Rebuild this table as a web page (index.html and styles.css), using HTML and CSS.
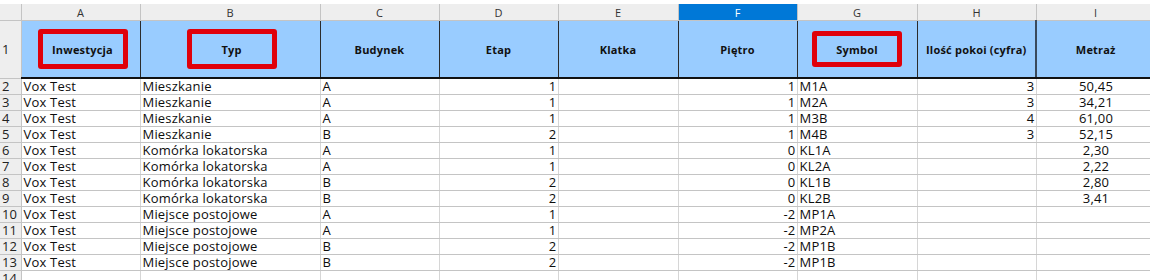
FILE: index.html
```html
<!DOCTYPE html>
<html lang="pl">
<head>
<meta charset="utf-8">
<title>Arkusz</title>
<link rel="stylesheet" href="styles.css">
</head>
<body>
<div class="sheet">
  <table class="grid">
    <colgroup>
      <col class="c-rn"><col class="c-a"><col class="c-b"><col class="c-c"><col class="c-d"><col class="c-e"><col class="c-f"><col class="c-g"><col class="c-h"><col class="c-i">
    </colgroup>
    <thead>
      <tr class="colhead">
        <th class="corner"></th>
        <th>A</th><th>B</th><th>C</th><th>D</th><th>E</th><th class="sel">F</th><th>G</th><th>H</th><th>I</th>
      </tr>
    </thead>
    <tbody>
      <tr class="titles">
        <td class="rn">1</td>
        <td><span class="mark">Inwestycja</span></td>
        <td><span class="mark">Typ</span></td>
        <td>Budynek</td>
        <td>Etap</td>
        <td>Klatka</td>
        <td>Piętro</td>
        <td><span class="mark mark-s">Symbol</span></td>
        <td>Ilość pokoi (cyfra)</td>
        <td class="last">Metraż</td>
      </tr>
      <tr><td class="rn">2</td><td>Vox Test</td><td>Mieszkanie</td><td>A</td><td class="r">1</td><td></td><td class="r">1</td><td>M1A</td><td class="r">3</td><td class="c">50,45</td></tr>
      <tr><td class="rn">3</td><td>Vox Test</td><td>Mieszkanie</td><td>A</td><td class="r">1</td><td></td><td class="r">1</td><td>M2A</td><td class="r">3</td><td class="c">34,21</td></tr>
      <tr><td class="rn">4</td><td>Vox Test</td><td>Mieszkanie</td><td>A</td><td class="r">1</td><td></td><td class="r">1</td><td>M3B</td><td class="r">4</td><td class="c">61,00</td></tr>
      <tr><td class="rn">5</td><td>Vox Test</td><td>Mieszkanie</td><td>B</td><td class="r">2</td><td></td><td class="r">1</td><td>M4B</td><td class="r">3</td><td class="c">52,15</td></tr>
      <tr><td class="rn">6</td><td>Vox Test</td><td>Komórka lokatorska</td><td>A</td><td class="r">1</td><td></td><td class="r">0</td><td>KL1A</td><td class="r"></td><td class="c">2,30</td></tr>
      <tr><td class="rn">7</td><td>Vox Test</td><td>Komórka lokatorska</td><td>A</td><td class="r">1</td><td></td><td class="r">0</td><td>KL2A</td><td class="r"></td><td class="c">2,22</td></tr>
      <tr><td class="rn">8</td><td>Vox Test</td><td>Komórka lokatorska</td><td>B</td><td class="r">2</td><td></td><td class="r">0</td><td>KL1B</td><td class="r"></td><td class="c">2,80</td></tr>
      <tr><td class="rn">9</td><td>Vox Test</td><td>Komórka lokatorska</td><td>B</td><td class="r">2</td><td></td><td class="r">0</td><td>KL2B</td><td class="r"></td><td class="c">3,41</td></tr>
      <tr><td class="rn">10</td><td>Vox Test</td><td>Miejsce postojowe</td><td>A</td><td class="r">1</td><td></td><td class="r">-2</td><td>MP1A</td><td class="r"></td><td class="c"></td></tr>
      <tr><td class="rn">11</td><td>Vox Test</td><td>Miejsce postojowe</td><td>A</td><td class="r">1</td><td></td><td class="r">-2</td><td>MP2A</td><td class="r"></td><td class="c"></td></tr>
      <tr><td class="rn">12</td><td>Vox Test</td><td>Miejsce postojowe</td><td>B</td><td class="r">2</td><td></td><td class="r">-2</td><td>MP1B</td><td class="r"></td><td class="c"></td></tr>
      <tr><td class="rn">13</td><td>Vox Test</td><td>Miejsce postojowe</td><td>B</td><td class="r">2</td><td></td><td class="r">-2</td><td>MP1B</td><td class="r"></td><td class="c"></td></tr>
      <tr><td class="rn">14</td><td></td><td></td><td></td><td></td><td></td><td></td><td></td><td></td><td></td></tr>
    </tbody>
  </table>
</div>
</body>
</html>
```

FILE: styles.css
```css
html, body {
  margin: 0;
  padding: 0;
  background: #ffffff;
}

.sheet {
  padding-top: 4px;
  width: 1160px;
  overflow: hidden;
}

.grid {
  border-collapse: collapse;
  table-layout: fixed;
  width: 1155px;
  font-family: "Open Sans", "Liberation Sans", sans-serif;
  color: #111111;
}

.c-rn { width: 21px; }
.c-a { width: 119px; }
.c-b { width: 180px; }
.c-c { width: 119px; }
.c-d { width: 119px; }
.c-e { width: 120px; }
.c-f { width: 119px; }
.c-g { width: 120px; }
.c-h { width: 119px; }
.c-i { width: 119px; }

.colhead th {
  height: 16px;
  padding: 0;
  background: #eeeeee;
  font-weight: normal;
  font-size: 11px;
  color: #333333;
  text-align: center;
  border-right: 1px solid #c4c4c4;
  border-bottom: 1px solid #c4c4c4;
  line-height: 15px;
}

.colhead th.sel {
  background: #0078d7;
  color: #ffffff;
}

.titles td {
  height: 56px;
  padding: 0;
  background: #99ccff;
  font-weight: bold;
  font-size: 11px;
  text-align: center;
  vertical-align: middle;
  border-right: 1px solid #2b2b2b;
  border-bottom: 2px solid #111111;
  color: #111111;
  white-space: nowrap;
}

.titles td:nth-child(2) {
  padding-left: 4px;
}

.titles td:nth-child(3) {
  padding-left: 3px;
}

.titles td.rn {
  background: #eeeeee;
  font-weight: normal;
  font-size: 13px;
  text-align: left;
  padding-left: 2px;
  border-right: 1px solid #c4c4c4;
  border-bottom: 1px solid #c4c4c4;
}

.titles td:nth-child(9) {
  border-right: 2px solid #3a4a5c;
}

.mark {
  display: inline-flex;
  align-items: center;
  justify-content: center;
  box-sizing: border-box;
  width: 90px;
  height: 40px;
  border: 5px solid #e0000a;
  border-radius: 3px;
  vertical-align: middle;
}

.mark-s {
  height: 36px;
}

tbody tr td {
  height: 15px;
  padding: 0 1px 0 2px;
  font-size: 13px;
  letter-spacing: 0.2px;
  line-height: 15px;
  white-space: nowrap;
  overflow: hidden;
  border-right: 1px solid #d6d6d6;
  border-bottom: 1px solid #c4c4c4;
  color: #0d0d0d;
}

tbody td.rn {
  background: #eeeeee;
  padding-left: 2px;
  letter-spacing: 0;
  color: #222222;
  border-right: 1px solid #c4c4c4;
}

td.r { text-align: right; }
td.c { text-align: center; }
```
